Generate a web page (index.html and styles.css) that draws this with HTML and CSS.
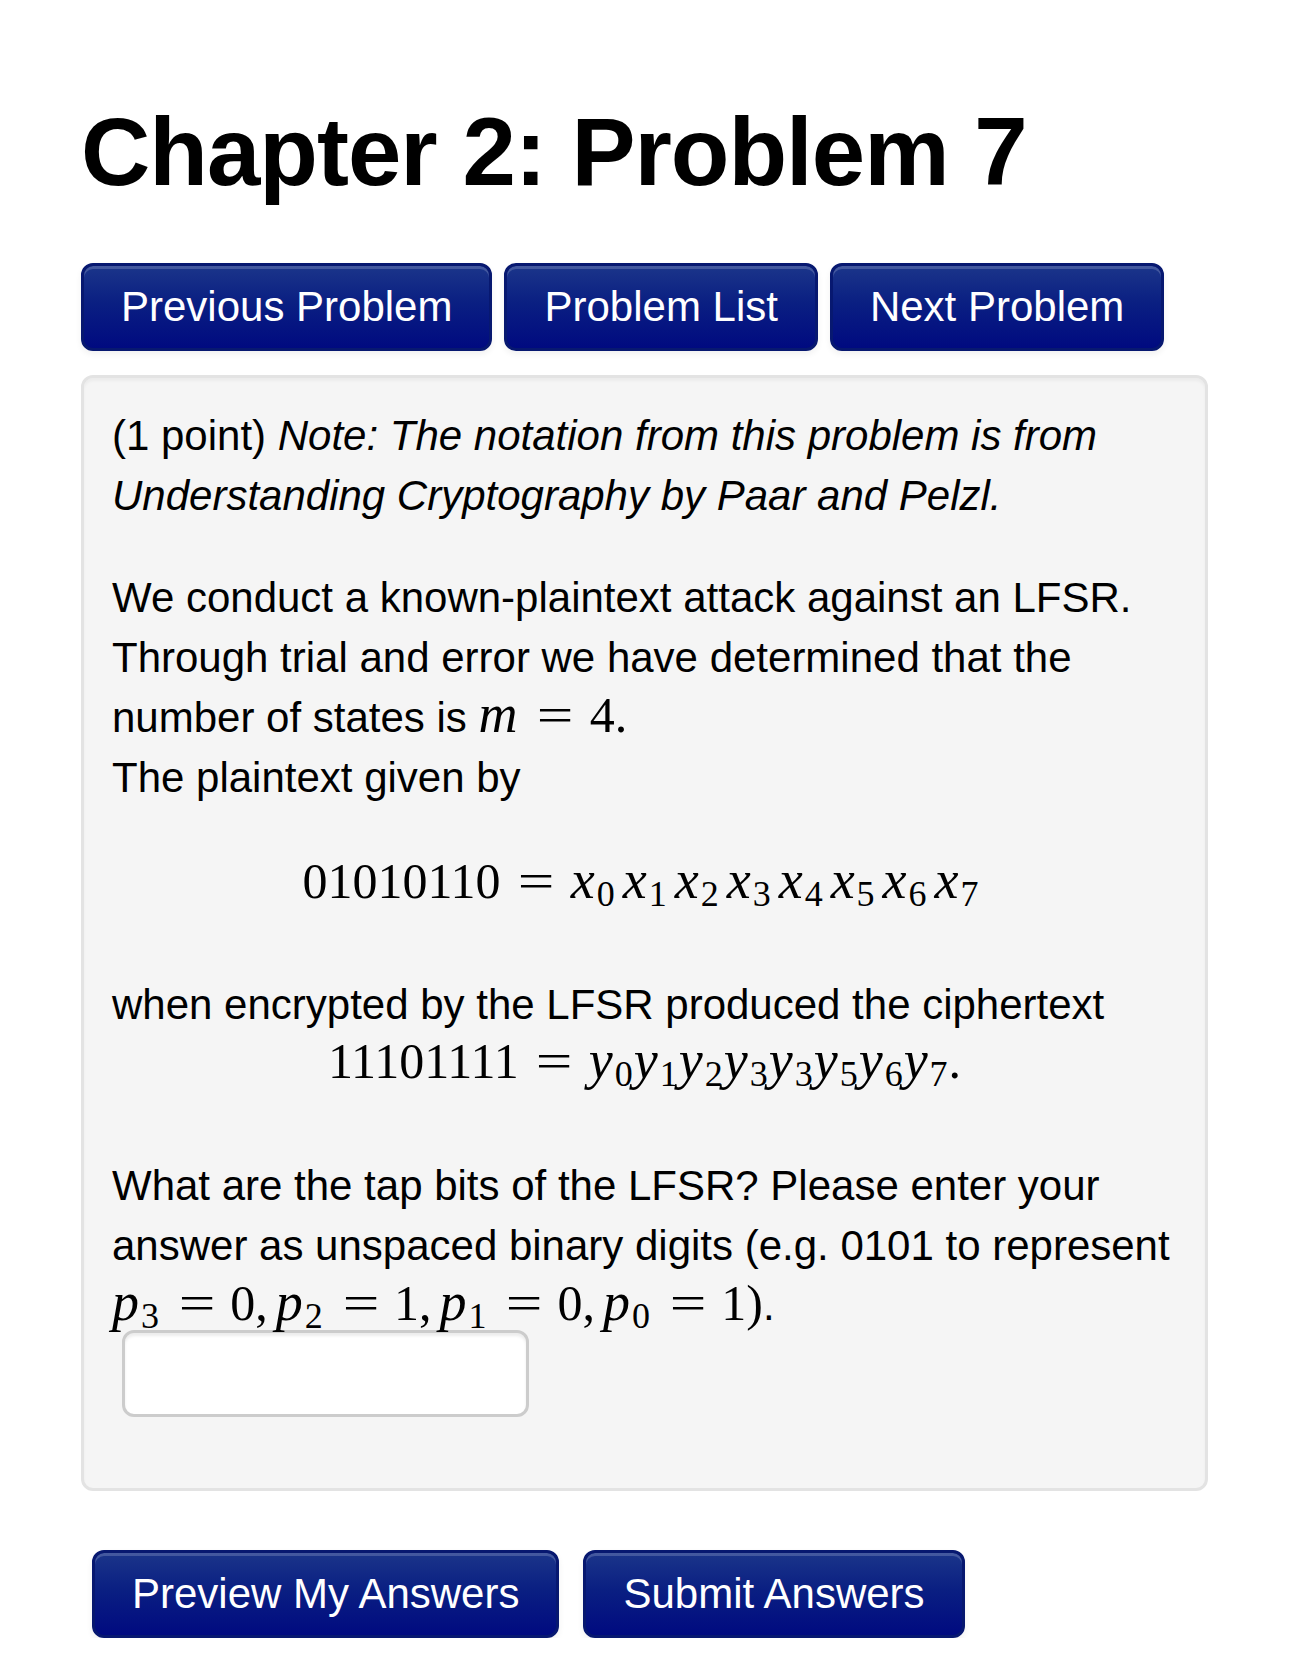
FILE: index.html
```html
<!DOCTYPE html>
<html lang="en">
<head>
    <meta charset="UTF-8">
    <meta name="viewport" content="width=device-width, initial-scale=1.0">
    <title>Chapter 2: Problem 7</title>
    <link rel="stylesheet" href="styles.css">
</head>
<body>
    <div class="main">
        <h1 class="title">Chapter 2: Problem 7</h1>

        <div class="navBar">
            <a href="javascript:;" class="btn">Previous Problem</a>
            <a href="javascript:;" class="btn">Problem List</a>
            <a href="javascript:;" class="btn">Next Problem</a>
        </div>

        <div class="problem">
            <p class="para">(1 point) <i>Note: The notation from this problem is from Understanding Cryptography by Paar and Pelzl.</i></p>

            <p class="para">We conduct a known-plaintext attack against an LFSR. Through trial and error we have determined that the number of states is <span class="math"><i class="mi">m</i><span class="op">=</span>4.</span><br>The plaintext given by</p>

            <div class="display eq1">01010110<span class="op">=</span><i class="mi">x</i><sub>0</sub><i class="mi">x</i><sub>1</sub><i class="mi">x</i><sub>2</sub><i class="mi">x</i><sub>3</sub><i class="mi">x</i><sub>4</sub><i class="mi">x</i><sub>5</sub><i class="mi">x</i><sub>6</sub><i class="mi">x</i><sub>7</sub></div>

            <p class="line">when encrypted by the LFSR produced the ciphertext</p>
            <div class="display eq2">11101111<span class="op">=</span><i class="mi">y</i><sub>0</sub><i class="mi">y</i><sub>1</sub><i class="mi">y</i><sub>2</sub><i class="mi">y</i><sub>3</sub><i class="mi">y</i><sub>3</sub><i class="mi">y</i><sub>5</sub><i class="mi">y</i><sub>6</sub><i class="mi">y</i><sub>7</sub>.</div>

            <p class="para last">What are the tap bits of the LFSR? Please enter your answer as unspaced binary digits (e.g. 0101 to represent <span class="math"><i class="mi">p</i><sub>3</sub><span class="op">=</span>0<span class="comma">,</span><i class="mi">p</i><sub>2</sub><span class="op">=</span>1<span class="comma">,</span><i class="mi">p</i><sub>1</sub><span class="op">=</span>0<span class="comma">,</span><i class="mi">p</i><sub>0</sub><span class="op">=</span>1)</span>.</p>
            <input type="text" class="answer">
        </div>

        <div class="submitBar">
            <a href="javascript:;" class="btn">Preview My Answers</a>
            <a href="javascript:;" class="btn">Submit Answers</a>
        </div>
    </div>
</body>
</html>
```

FILE: styles.css
```css
*{
    margin: 0;
    padding: 0;
}
a{
    text-decoration: none;
}
body{
    background: #fff;
    color: #000;
    font-family: "Liberation Sans", Arial, sans-serif;
    font-size: 42px;
    line-height: 60px;
}
.main{
    padding: 94px 82px 0 81px;
}
.title{
    font-size: 96px;
    line-height: 115px;
    font-weight: bold;
    letter-spacing: -1px;
}
.navBar{
    display: flex;
    gap: 12px;
    margin-top: 54px;
}
.btn{
    display: inline-block;
    padding: 11px 37px;
    line-height: 60px;
    color: #fff;
    border: 3px solid #071870;
    border-radius: 12px;
    background: linear-gradient(to bottom, #1b358a 0%, #0a1f82 45%, #000a80 100%);
    box-shadow: inset 0 3px 0 rgba(255,255,255,0.18), 0 3px 6px rgba(0,0,0,0.06);
}
.problem{
    margin-top: 24px;
    padding: 28px 28px 71px;
    background: #f5f5f5;
    border: 3px solid #e3e3e3;
    border-radius: 12px;
    box-shadow: inset 0 3px 3px rgba(0,0,0,0.04);
}
.para{
    margin-bottom: 42px;
}
.para.last{
    margin-bottom: 0;
}
.math, .display{
    font-family: "Liberation Serif", "Times New Roman", serif;
    font-size: 50px;
}
.math{
    line-height: 50px;
}
.mi{
    font-size: 54px;
    padding-right: 2px;
}
.op{
    display: inline-block;
    margin: 0 21px;
    transform: scaleX(1.3);
}
.last .op{
    margin: 0 19px;
}
.comma{
    margin-right: 8px;
}
sub{
    font-size: 36px;
    line-height: 0;
    vertical-align: -8px;
    margin-right: 5px;
}
.display{
    text-align: center;
}
.eq1{
    line-height: 60px;
    margin: 33px 0 64px;
}
.eq1 sub{
    margin-right: 8px;
}
.eq2{
    line-height: 50px;
    margin-bottom: 70px;
}
.eq2 sub{
    margin-right: 1px;
}
.answer{
    display: block;
    width: 407px;
    height: 87px;
    margin: -6px 0 0 10px;
    box-sizing: border-box;
    background: #fff;
    border: 3px solid #ccc;
    border-radius: 12px;
    box-shadow: inset 0 3px 3px rgba(0,0,0,0.075);
}
.submitBar{
    display: flex;
    gap: 24px;
    margin: 59px 0 0 11px;
}
```
